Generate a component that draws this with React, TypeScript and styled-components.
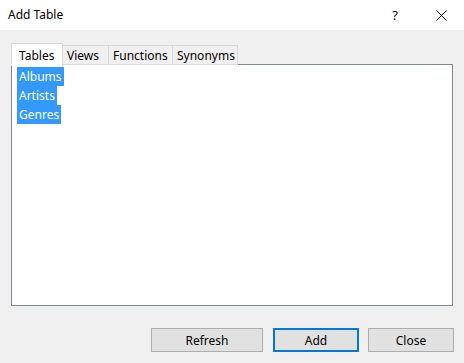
import React from 'react';
import styled, { createGlobalStyle } from 'styled-components';

const GlobalStyle = createGlobalStyle`
  html, body {
    margin: 0;
    padding: 0;
    background: #f0f0f0;
  }
  body {
    font-family: "Noto Sans", "Open Sans", Arial, sans-serif;
    font-size: 12px;
    color: #000;
  }
`;

const Window = styled.div`
  width: 464px;
  height: 363px;
  display: flex;
  flex-direction: column;
  background: #f0f0f0;
  overflow: hidden;
`;

const TitleBar = styled.div`
  height: 30px;
  background: #fff;
  display: flex;
  align-items: center;
  padding-left: 8px;
`;

const Title = styled.div`
  flex: 1;
  font-size: 12px;
  padding-bottom: 1px;
`;

const TitleButton = styled.div`
  width: 46px;
  height: 30px;
  display: flex;
  align-items: center;
  justify-content: center;
  font-size: 13px;
`;

const Body = styled.div`
  flex: 1;
  display: flex;
  flex-direction: column;
  padding: 13px 11px 10px 11px;
`;

const TabStrip = styled.div`
  display: flex;
  align-items: flex-end;
  height: 22px;
  position: relative;
  z-index: 1;
  margin-bottom: -1px;
`;

const Tab = styled.div<{ $active?: boolean; $w: number }>`
  box-sizing: border-box;
  width: ${(p) => p.$w}px;
  height: ${(p) => (p.$active ? '23px' : '20px')};
  padding-left: ${(p) => (p.$active ? '7px' : '4px')};
  margin-bottom: ${(p) => (p.$active ? '-1px' : '0')};
  display: flex;
  align-items: center;
  background: ${(p) => (p.$active ? '#fff' : '#f0f0f0')};
  border: 1px solid #d9d9d9;
  border-bottom: ${(p) => (p.$active ? 'none' : '1px solid #d9d9d9')};
  margin-left: ${(p) => (p.$active ? '0' : '-1px')};
  position: relative;
  z-index: ${(p) => (p.$active ? 2 : 1)};
  white-space: nowrap;
`;

const Panel = styled.div`
  box-sizing: border-box;
  width: 442px;
  height: 242px;
  background: #fff;
  border: 1px solid #828790;
  padding: 2px 5px;
  display: flex;
  flex-direction: column;
  align-items: flex-start;
`;

const ListItem = styled.div<{ $selected?: boolean }>`
  height: 19px;
  line-height: 19px;
  padding: 0 2px;
  background: ${(p) => (p.$selected ? '#3399ff' : 'transparent')};
  color: ${(p) => (p.$selected ? '#fff' : '#000')};
`;

const ButtonRow = styled.div`
  display: flex;
  justify-content: flex-end;
  margin-top: 22px;
  margin-right: -1px;
  gap: 9px;
`;

const Button = styled.button<{ $default?: boolean; $w: number }>`
  box-sizing: border-box;
  width: ${(p) => p.$w}px;
  height: 24px;
  background: #e1e1e1;
  border: ${(p) => (p.$default ? '2px solid #0078d7' : '1px solid #adadad')};
  font-family: inherit;
  font-size: 12px;
  color: #000;
  padding: 0;
  margin: 0;
`;

const RefreshButton = styled(Button)`
  margin-right: 1px;
`;

const tabs = [
  { label: 'Tables', w: 52 },
  { label: 'Views', w: 47 },
  { label: 'Functions', w: 65 },
  { label: 'Synonyms', w: 66 },
];
const tables = ['Albums', 'Artists', 'Genres'];

const CloseIcon = () => (
  <svg width="11" height="11" viewBox="0 0 11 11">
    <path d="M0.5 0.5 L10.5 10.5 M10.5 0.5 L0.5 10.5" stroke="#000" strokeWidth="1" fill="none" />
  </svg>
);

export default function App() {
  return (
    <>
      <GlobalStyle />
      <Window>
        <TitleBar>
          <Title>Add Table</Title>
          <TitleButton>?</TitleButton>
          <TitleButton>
            <CloseIcon />
          </TitleButton>
        </TitleBar>
        <Body>
          <TabStrip>
            {tabs.map((t, i) => (
              <Tab key={t.label} $active={i === 0} $w={t.w}>
                {t.label}
              </Tab>
            ))}
          </TabStrip>
          <Panel>
            {tables.map((t) => (
              <ListItem key={t} $selected>
                {t}
              </ListItem>
            ))}
          </Panel>
          <ButtonRow>
            <RefreshButton $w={112}>Refresh</RefreshButton>
            <Button $w={86} $default>
              Add
            </Button>
            <Button $w={86}>Close</Button>
          </ButtonRow>
        </Body>
      </Window>
    </>
  );
}
